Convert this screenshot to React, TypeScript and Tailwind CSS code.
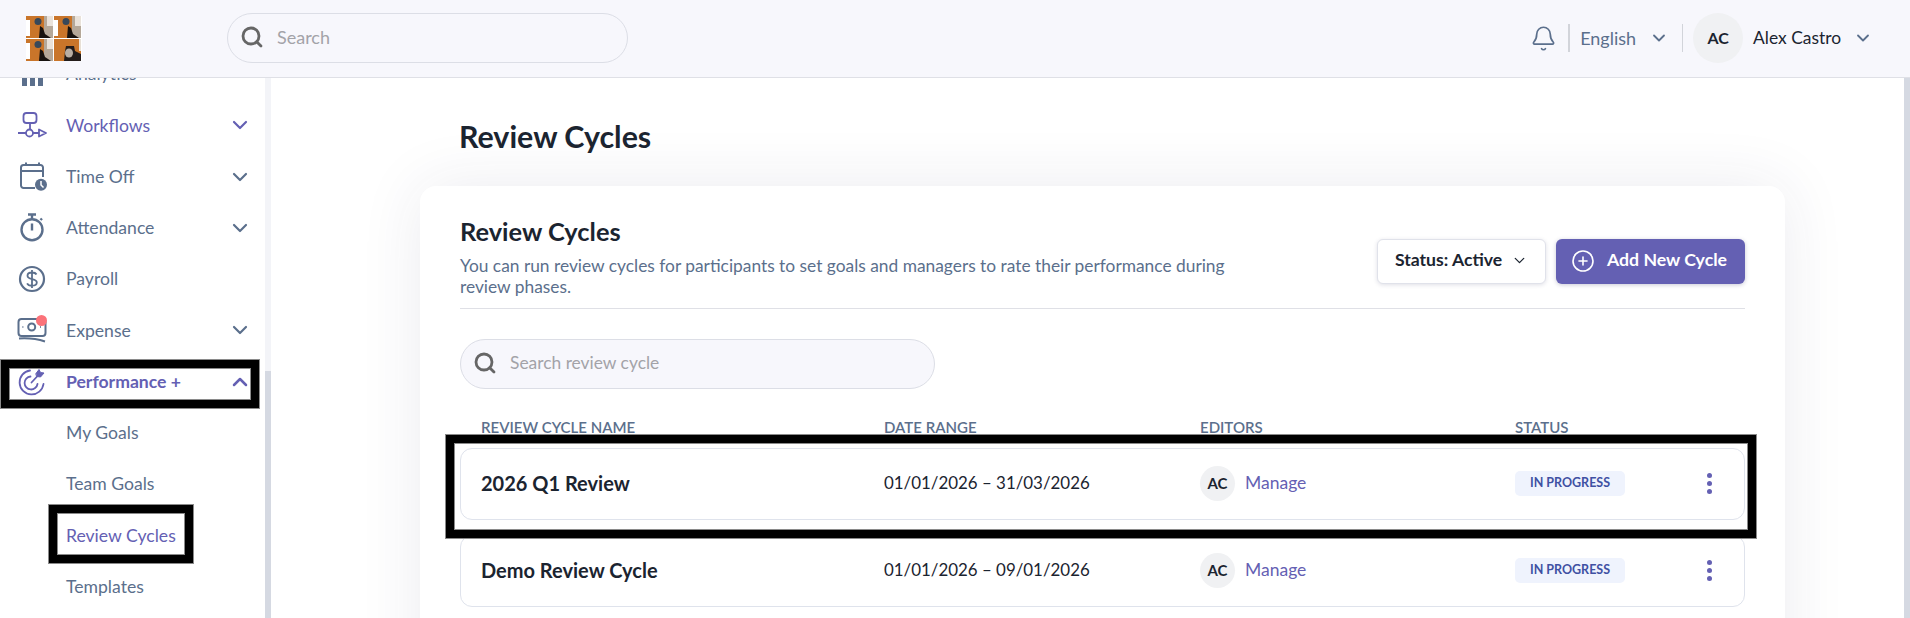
import { Bell, ChevronDown, ChevronUp, CirclePlus, Search } from "lucide-react";
import type { ReactNode } from "react";

const SLATE = "#5b6f8c";
const PURPLE = "#6460b3";

function LogoTile({ x, y, closeUp }: { x: number; y: number; closeUp?: boolean }) {
  if (closeUp) {
    return (
      <g transform={`translate(${x} ${y})`}>
        <rect width="27" height="22" fill="#c9752a" />
        <rect x="25" width="2" height="12" fill="#e8e0d6" />
        <path d="M10 22 L11 12 L12 7 L20 7 L21 12 L27 15 L27 22 Z" fill="#231c1a" />
        <ellipse cx="15" cy="14" rx="4" ry="4.5" fill="#b9aea3" />
      </g>
    );
  }
  return (
    <g transform={`translate(${x} ${y})`}>
      <rect width="27" height="22" fill="#c9752a" />
      <rect y="4" width="4" height="16" fill="#ffffff" />
      <rect x="18" width="9" height="22" fill="#b5a899" />
      <rect x="21" width="6" height="10" fill="#e9e2da" />
      <circle cx="12" cy="5.5" r="3.5" fill="#37485a" />
      <path d="M13 22 L14 10 L17 12 L19 18 L25 22 Z" fill="#17120f" />
    </g>
  );
}

function Logo() {
  return (
    <svg width="56" height="45" viewBox="0 0 56 45" className="shrink-0">
      <rect width="56" height="45" fill="#ffffff" />
      <LogoTile x={0} y={0} />
      <LogoTile x={28} y={0} />
      <LogoTile x={0} y={23} />
      <LogoTile x={28} y={23} closeUp />
    </svg>
  );
}

function WorkflowsIcon() {
  return (
    <svg width="30" height="30" viewBox="0 0 30 30" fill="none" stroke={PURPLE} strokeWidth="1.800">
      <rect x="6.500" y="3" width="13" height="10" rx="3" />
      <path d="M13 13v6.500" />
      <circle cx="12.500" cy="23" r="3.500" />
      <path d="M1 23h8M16 23h6M22 19.500v7l7-3.500z" strokeLinejoin="round" />
    </svg>
  );
}

function TimeOffIcon() {
  return (
    <svg width="30" height="30" viewBox="0 0 30 30" fill="none" stroke={SLATE} strokeWidth="2">
      <path d="M18 26H6.500A2.500 2.500 0 0 1 4 23.500V5.500A2.500 2.500 0 0 1 6.500 3h17A2.500 2.500 0 0 1 26 5.500V15" />
      <path d="M4 9h22M9 .5V3M22 .5V3" />
      <circle cx="24" cy="22.700" r="6" fill={SLATE} stroke="none" />
      <path d="M24 19v4l2.500 2.500" stroke="#ffffff" strokeWidth="1.500" />
    </svg>
  );
}

function AttendanceIcon() {
  return (
    <svg width="30" height="30" viewBox="0 0 30 30" fill="none" stroke={SLATE} strokeWidth="2.400">
      <circle cx="15" cy="16.700" r="10.500" />
      <path d="M11 1.500h8M15 1.500v4M15 10.500v7M23.500 7l1.500-1.500" />
    </svg>
  );
}

function PayrollIcon() {
  return (
    <svg width="30" height="30" viewBox="0 0 30 30" fill="none" stroke={SLATE} strokeWidth="2.200">
      <circle cx="15" cy="15" r="12" />
      <path d="M19.500 10.500c-.8-1.500-2.500-2-4.500-2-2.500 0-4.500 1.300-4.500 3.300 0 4.700 9.300 2 9.300 6.700 0 2-2.200 3.200-4.800 3.200-2.300 0-4.100-.8-4.900-2.400M15 6v18" strokeWidth="1.800" />
    </svg>
  );
}

function ExpenseIcon() {
  return (
    <span className="relative flex h-[30px] w-[30px]">
      <svg width="30" height="30" viewBox="0 0 30 30" fill="none" stroke={SLATE} strokeWidth="2">
        <rect x="1.500" y="4" width="27" height="17" rx="3" />
        <circle cx="14.700" cy="12" r="3.500" />
        <path d="M5.500 12h.8M23 12h.8" />
        <path d="M2 23.500c8-.5 17 0 26 3" />
      </svg>
      <span className="absolute left-[19px] top-[0px] h-[11px] w-[11px] rounded-full bg-[#fb7279]" />
    </span>
  );
}

function PerformanceIcon() {
  return (
    <svg width="30" height="30" viewBox="0 0 30 30" fill="none" stroke={PURPLE} strokeWidth="1.800" strokeLinecap="round">
      <path d="M13 3.500A12 12 0 1 0 26.500 17" />
      <path d="M13.500 9.500A6.500 6.500 0 1 0 20.500 17" />
      <path d="M14.500 15.500 21 8.500" />
      <path d="M19 6.500 22 2.500l1.500 3 3.500.5-3.500 4-3.500-.5z" fill={PURPLE} strokeWidth="1" strokeLinejoin="round" />
    </svg>
  );
}

function AnalyticsIcon() {
  return (
    <svg width="30" height="30" viewBox="0 0 30 30" fill={SLATE}>
      <rect x="5" y="11" width="5" height="16" />
      <rect x="13" y="7" width="5" height="20" />
      <rect x="21" y="9" width="5" height="18" />
    </svg>
  );
}

function NavRow({
  icon,
  label,
  chevron,
  active,
  bold,
  open,
}: {
  icon?: ReactNode;
  label: string;
  chevron?: boolean;
  active?: boolean;
  bold?: boolean;
  open?: boolean;
}) {
  return (
    <div className={`flex h-[51.250px] items-center ${active ? "text-[#6460b3]" : "text-[#5b6f8c]"}`}>
      <div className="flex w-[66px] shrink-0 justify-center pr-[2px]">{icon}</div>
      <span className={`text-[17.600px] leading-none ${bold ? "font-bold" : ""}`}>{label}</span>
      {chevron && (
        <span className="ml-auto mr-[13px] flex">
          {open ? <ChevronUp size={24} strokeWidth={2.500} /> : <ChevronDown size={24} strokeWidth={2.200} />}
        </span>
      )}
    </div>
  );
}

function Sidebar() {
  return (
    <div className="flex h-full shrink-0">
      <nav className="h-full w-[265px] overflow-hidden bg-white">
        <div className="mt-[-29.500px]">
          <NavRow icon={<AnalyticsIcon />} label="Analytics" />
          <NavRow icon={<WorkflowsIcon />} label="Workflows" chevron active />
          <NavRow icon={<TimeOffIcon />} label="Time Off" chevron />
          <NavRow icon={<AttendanceIcon />} label="Attendance" chevron />
          <NavRow icon={<PayrollIcon />} label="Payroll" />
          <NavRow icon={<ExpenseIcon />} label="Expense" chevron />
          <NavRow icon={<PerformanceIcon />} label="Performance +" chevron active bold open />
          <NavRow label="My Goals" />
          <NavRow label="Team Goals" />
          <NavRow label="Review Cycles" active />
          <NavRow label="Templates" />
        </div>
      </nav>
      <div className="h-full w-[6px] bg-[#f3f4f8] pt-[293px]">
        <div className="h-full bg-[#d5d9e2]" />
      </div>
    </div>
  );
}

function Header() {
  return (
    <header className="flex h-[78px] shrink-0 items-center border-b border-[#dfe0e6] bg-[#f7f7fc] pb-[1px] pl-[26px] pr-[37px]">
      <Logo />
      <div className="ml-[145px] flex h-[50px] w-[401px] items-center rounded-full border border-[#dcdee6] pb-[2px] pl-[12px]">
        <Search size={24} strokeWidth={2.800} className="text-[#666666]" />
        <span className="ml-[13px] text-[18px] text-[#a3a3a8]">Search</span>
      </div>
      <div className="ml-auto flex items-center">
        <Bell size={27} strokeWidth={1.500} className="text-[#5b6f8c]" />
        <div className="ml-[11px] h-[28px] w-[2px] bg-[#d2d4da]" />
        <span className="ml-[10px] text-[18px] text-[#5b6f8c]">English</span>
        <ChevronDown size={20} strokeWidth={2.200} className="ml-[13px] text-[#5b6f8c]" />
        <div className="ml-[13px] h-[28px] w-px bg-[#d2d4da]" />
        <div className="ml-[10px] flex h-[50px] w-[50px] items-center justify-center rounded-full bg-[#f0f1f3] text-[16px] font-bold text-[#1b2430]">
          AC
        </div>
        <span className="ml-[10px] text-[17.400px] text-[#1b2430]">Alex Castro</span>
        <ChevronDown size={20} strokeWidth={2.200} className="ml-[12px] text-[#5b6f8c]" />
      </div>
    </header>
  );
}

function CycleRow({ name, dates }: { name: string; dates: string }) {
  return (
    <div className="grid h-[72px] grid-cols-[403px_316px_315px_1fr] items-center rounded-[12px] border border-[#dfe3ec] pb-[2px] pl-[20px] pr-[32px]">
      <span className="text-[20px] font-bold text-[#1b2430]">{name}</span>
      <span className="text-[16.900px] text-[#1b2430]">{dates}</span>
      <div className="flex items-center">
        <div className="flex h-[35px] w-[35px] items-center justify-center rounded-full bg-[#f0f1f3] text-[15px] font-bold text-[#1b2430]">
          AC
        </div>
        <span className="ml-[10px] text-[17.500px] text-[#6460b3]">Manage</span>
      </div>
      <div className="flex items-center justify-between">
        <span className="flex h-[25px] w-[110px] items-center justify-center rounded-[5px] bg-[#eff3fd] text-[12.500px] font-bold text-[#3f51a3]">
          IN PROGRESS
        </span>
        <span className="flex flex-col gap-[3px]">
          <span className="h-[5px] w-[5px] rounded-full bg-[#6460b3]" />
          <span className="h-[5px] w-[5px] rounded-full bg-[#6460b3]" />
          <span className="h-[5px] w-[5px] rounded-full bg-[#6460b3]" />
        </span>
      </div>
    </div>
  );
}

function Main() {
  return (
    <main className="h-full min-w-0 flex-1 overflow-hidden bg-white pl-[149px] pr-[119px]">
      <h1 className="ml-[39px] mt-[39px] h-[38px] text-[30.400px] font-bold leading-[38px] text-[#1b2430]">Review Cycles</h1>
      <section className="mt-[31px] h-[600px] rounded-[16px] bg-white px-[40px] pt-[29px] shadow-[0_0_64px_rgba(40,40,90,0.09)]">
        <div className="flex items-start justify-between border-b border-[#dfe0e6] pb-[11px]">
          <div className="w-[780px]">
            <h2 className="text-[25.400px] font-bold leading-[32px] text-[#1b2430]">Review Cycles</h2>
            <p className="mt-[8px] text-[17.350px] leading-[21px] text-[#5b6f8c]">
              You can run review cycles for participants to set goals and managers to rate their performance during
              review phases.
            </p>
          </div>
          <div className="mt-[24px] flex gap-[10px]">
            <button className="flex h-[45px] w-[169px] items-center justify-center gap-[9px] rounded-[6px] border border-[#e0e2ea] bg-white pb-[2px] text-[17.600px] font-bold text-[#1b2430] shadow-[0_1px_4px_rgba(40,40,90,0.15)]">
              Status: Active
              <ChevronDown size={17} strokeWidth={1.800} />
            </button>
            <button className="flex h-[45px] w-[189px] items-center justify-center gap-[12px] rounded-[6px] bg-[#6460b3] pb-[2px] pr-[3px] text-[17.700px] font-bold text-white shadow-[0_1px_4px_rgba(40,40,90,0.25)]">
              <CirclePlus size={24} strokeWidth={1.600} />
              Add New Cycle
            </button>
          </div>
        </div>
        <div className="mt-[30px] flex h-[50px] w-[475px] items-center rounded-full border border-[#dcdee6] bg-[#f7f7fc] pb-[2px] pl-[12px]">
          <Search size={24} strokeWidth={2.800} className="text-[#666666]" />
          <span className="ml-[13px] text-[17.400px] text-[#a3a3a8]">Search review cycle</span>
        </div>
        <div className="mt-[28px] grid h-[20px] grid-cols-[403px_316px_315px_1fr] items-center pl-[21px] text-[15px] font-semibold uppercase leading-[20px] text-[#5b6f8c]">
          <span>Review cycle name</span>
          <span>Date range</span>
          <span>Editors</span>
          <span>Status</span>
        </div>
        <div className="mt-[11px] flex flex-col gap-[15px]">
          <CycleRow name="2026 Q1 Review" dates="01/01/2026 – 31/03/2026" />
          <CycleRow name="Demo Review Cycle" dates="01/01/2026 – 09/01/2026" />
        </div>
      </section>
    </main>
  );
}

export default function App() {
  return (
    <div className="relative flex h-[618px] w-[1910px] flex-col overflow-hidden bg-white [font-family:Lato,sans-serif]">
      <Header />
      <div className="flex min-h-0 flex-1">
        <Sidebar />
        <Main />
        <div className="h-full w-[6px] shrink-0 bg-[#d5d9e2]" />
      </div>
      {/* annotation boxes drawn over the screenshot */}
      <div className="absolute left-[1px] top-[360px] h-[48px] w-[258px] border-[8px] border-black shadow-[0_0_0_1px_#8a8a8a,inset_0_0_0_1px_#8a8a8a]" />
      <div className="absolute left-[49px] top-[505px] h-[58px] w-[144px] border-[8px] border-black shadow-[0_0_0_1px_#8a8a8a,inset_0_0_0_1px_#8a8a8a]" />
      <div className="absolute left-[446px] top-[435px] h-[103px] w-[1310px] border-[8px] border-black shadow-[0_0_0_1px_#8a8a8a,inset_0_0_0_1px_#8a8a8a]" />
    </div>
  );
}
